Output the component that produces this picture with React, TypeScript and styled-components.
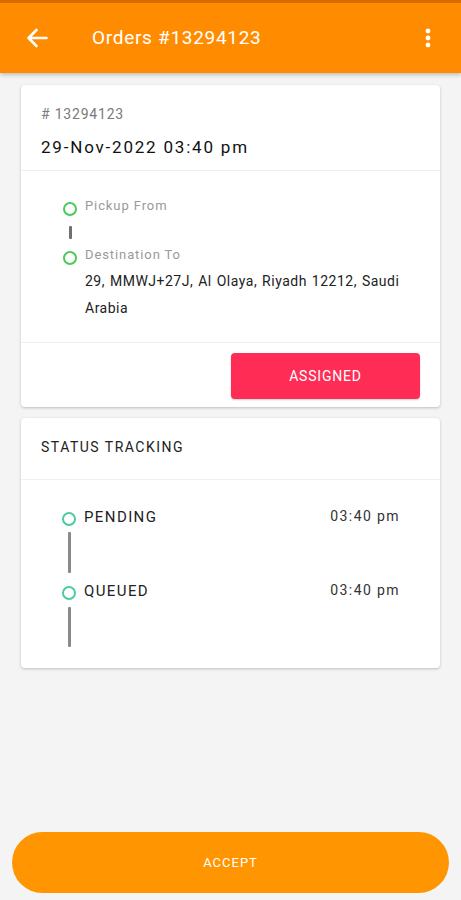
import React from 'react';
import styled, { createGlobalStyle } from 'styled-components';

const GlobalStyle = createGlobalStyle`
    html, body {
        margin: 0;
        padding: 0;
        background: #f4f4f4;
        font-family: Roboto, "Noto Sans", Arial, sans-serif;
    }
    * {
        box-sizing: border-box;
    }
`;

interface StatusItem {
    label: string;
    time: string;
}

const statuses: StatusItem[] = [
    { label: 'PENDING', time: '03:40 pm' },
    { label: 'QUEUED', time: '03:40 pm' },
];

const BackIcon = () => (
    <svg width="22" height="20" viewBox="0 0 22 20" fill="none">
        <path d="M20.5 10H2.5M10.5 2L2.5 10L10.5 18" stroke="#fff" strokeWidth="2.6" strokeLinecap="round" strokeLinejoin="round" />
    </svg>
);

const KebabIcon = () => (
    <svg width="6" height="20" viewBox="0 0 6 20">
        <circle cx="3" cy="3" r="2.4" fill="#fff" />
        <circle cx="3" cy="10" r="2.4" fill="#fff" />
        <circle cx="3" cy="17" r="2.4" fill="#fff" />
    </svg>
);

const App: React.FC = () => {
    return (
        <Page>
            <GlobalStyle />
            <Header>
                <IconButton aria-label="back">
                    <BackIcon />
                </IconButton>
                <Title>Orders #13294123</Title>
                <IconButton aria-label="menu">
                    <KebabIcon />
                </IconButton>
            </Header>

            <Content>
                <Card>
                    <CardHead>
                        <OrderNo># 13294123</OrderNo>
                        <OrderDate>29-Nov-2022 03:40 pm</OrderDate>
                    </CardHead>
                    <RouteSection>
                        <Stop>
                            <Dot $color="#4cc95a" />
                            <StopLabel>Pickup From</StopLabel>
                        </Stop>
                        <Connector $height={13} $gap={10} $color="#707070" />
                        <Stop $gap={7}>
                            <Dot $color="#4cc95a" />
                            <StopLabel>Destination To</StopLabel>
                        </Stop>
                        <Address>29, MMWJ+27J, Al Olaya, Riyadh 12212, Saudi Arabia</Address>
                    </RouteSection>
                    <CardFooter>
                        <AssignedButton>ASSIGNED</AssignedButton>
                    </CardFooter>
                </Card>

                <Card>
                    <TrackingHead>STATUS TRACKING</TrackingHead>
                    <TrackingSection>
                        {statuses.map((s, i) => (
                            <React.Fragment key={s.label}>
                                <StatusRow $gap={i === 0 ? 0 : 8}>
                                    <Dot $color="#4ccba2" />
                                    <StatusLabel>{s.label}</StatusLabel>
                                    <StatusTime>{s.time}</StatusTime>
                                </StatusRow>
                                <Connector $height={i === 0 ? 41 : 40} $gap={i === 0 ? 5 : 6} $color="#8a8a8a" />
                            </React.Fragment>
                        ))}
                    </TrackingSection>
                </Card>
            </Content>

            <BottomBar>
                <AcceptButton>ACCEPT</AcceptButton>
            </BottomBar>
        </Page>
    );
};

const Page = styled.div`
    display: flex;
    flex-direction: column;
    min-height: 100vh;
`;

const Header = styled.header`
    height: 73px;
    border-top: 3px solid #d86c00;
    background: #ff8c00;
    box-shadow: 0 2px 4px rgba(0, 0, 0, 0.22);
    display: flex;
    align-items: center;
    padding: 0 30px 0 26px;
    gap: 44px;
`;

const IconButton = styled.button`
    background: none;
    border: none;
    padding: 0;
    display: flex;
    align-items: center;
    justify-content: center;
    cursor: pointer;
`;

const Title = styled.h1`
    flex: 1;
    margin: 0;
    color: #fff;
    font-size: 19px;
    font-weight: 400;
    line-height: 24px;
    letter-spacing: 0.7px;
`;

const Content = styled.main`
    display: flex;
    flex-direction: column;
    gap: 11px;
    padding: 12px 21px 0;
`;

const Card = styled.section`
    background: #fff;
    border-radius: 4px;
    box-shadow: 0 1px 3px rgba(0, 0, 0, 0.22);
    overflow: hidden;
`;

const CardHead = styled.div`
    padding: 19px 20px 11px;
    border-bottom: 1px solid #f0f0f0;
`;

const OrderNo = styled.div`
    color: #7a7a7a;
    font-size: 14px;
    line-height: 20px;
    letter-spacing: 0.8px;
`;

const OrderDate = styled.div`
    margin-top: 11px;
    color: #111;
    font-size: 17px;
    line-height: 24px;
    letter-spacing: 1.8px;
`;

const RouteSection = styled.div`
    padding: 26px 36px 20px 42px;
    border-bottom: 1px solid #f0f0f0;
`;

const Stop = styled.div<{ $gap?: number }>`
    display: flex;
    align-items: flex-start;
    gap: 8px;
    margin-top: ${p => p.$gap ?? 0}px;
`;

const Dot = styled.span<{ $color: string }>`
    flex: none;
    width: 14px;
    height: 14px;
    margin-top: 5px;
    border-radius: 50%;
    border: 2.5px solid ${p => p.$color};
`;

const StopLabel = styled.span`
    color: #9a9a9a;
    font-size: 13px;
    line-height: 18px;
    letter-spacing: 0.9px;
`;

const Connector = styled.div<{ $height: number; $gap: number; $color: string }>`
    width: 3px;
    height: ${p => p.$height}px;
    margin: ${p => p.$gap}px 0 0 5.5px;
    background: ${p => p.$color};
    border-radius: 1px;
`;

const Address = styled.p`
    margin: 3px 0 0 22px;
    color: #222;
    font-size: 14px;
    line-height: 27px;
    letter-spacing: 0.5px;
    word-spacing: 1px;
`;

const CardFooter = styled.div`
    display: flex;
    justify-content: flex-end;
    padding: 10px 20px 8px;
`;

const AssignedButton = styled.button`
    width: 189px;
    height: 46px;
    border: none;
    border-radius: 4px;
    background: #ff2d55;
    color: #fff;
    font-family: inherit;
    font-size: 14px;
    font-weight: 400;
    letter-spacing: 0.8px;
    box-shadow: 0 1px 2px rgba(0, 0, 0, 0.2);
`;

const TrackingHead = styled.div`
    padding: 19px 20px 22px;
    border-bottom: 1px solid #f0f0f0;
    color: #222;
    font-size: 14px;
    line-height: 20px;
    letter-spacing: 1.5px;
`;

const TrackingSection = styled.div`
    padding: 27px 40px 21px 41px;
`;

const StatusRow = styled.div<{ $gap: number }>`
    display: flex;
    align-items: flex-start;
    gap: 8px;
    margin-top: ${p => p.$gap}px;
`;

const StatusLabel = styled.span`
    flex: 1;
    color: #222;
    font-size: 15px;
    line-height: 20px;
    letter-spacing: 1.4px;
`;

const StatusTime = styled.span`
    color: #333;
    font-size: 14px;
    line-height: 18px;
    letter-spacing: 1.4px;
`;

const BottomBar = styled.div`
    margin-top: auto;
    padding: 0 12px 7px;
`;

const AcceptButton = styled.button`
    width: 100%;
    height: 61px;
    border: none;
    border-radius: 31px;
    background: #ff9500;
    color: #fff;
    font-family: inherit;
    font-size: 13px;
    font-weight: 400;
    letter-spacing: 1px;
`;

export default App;
